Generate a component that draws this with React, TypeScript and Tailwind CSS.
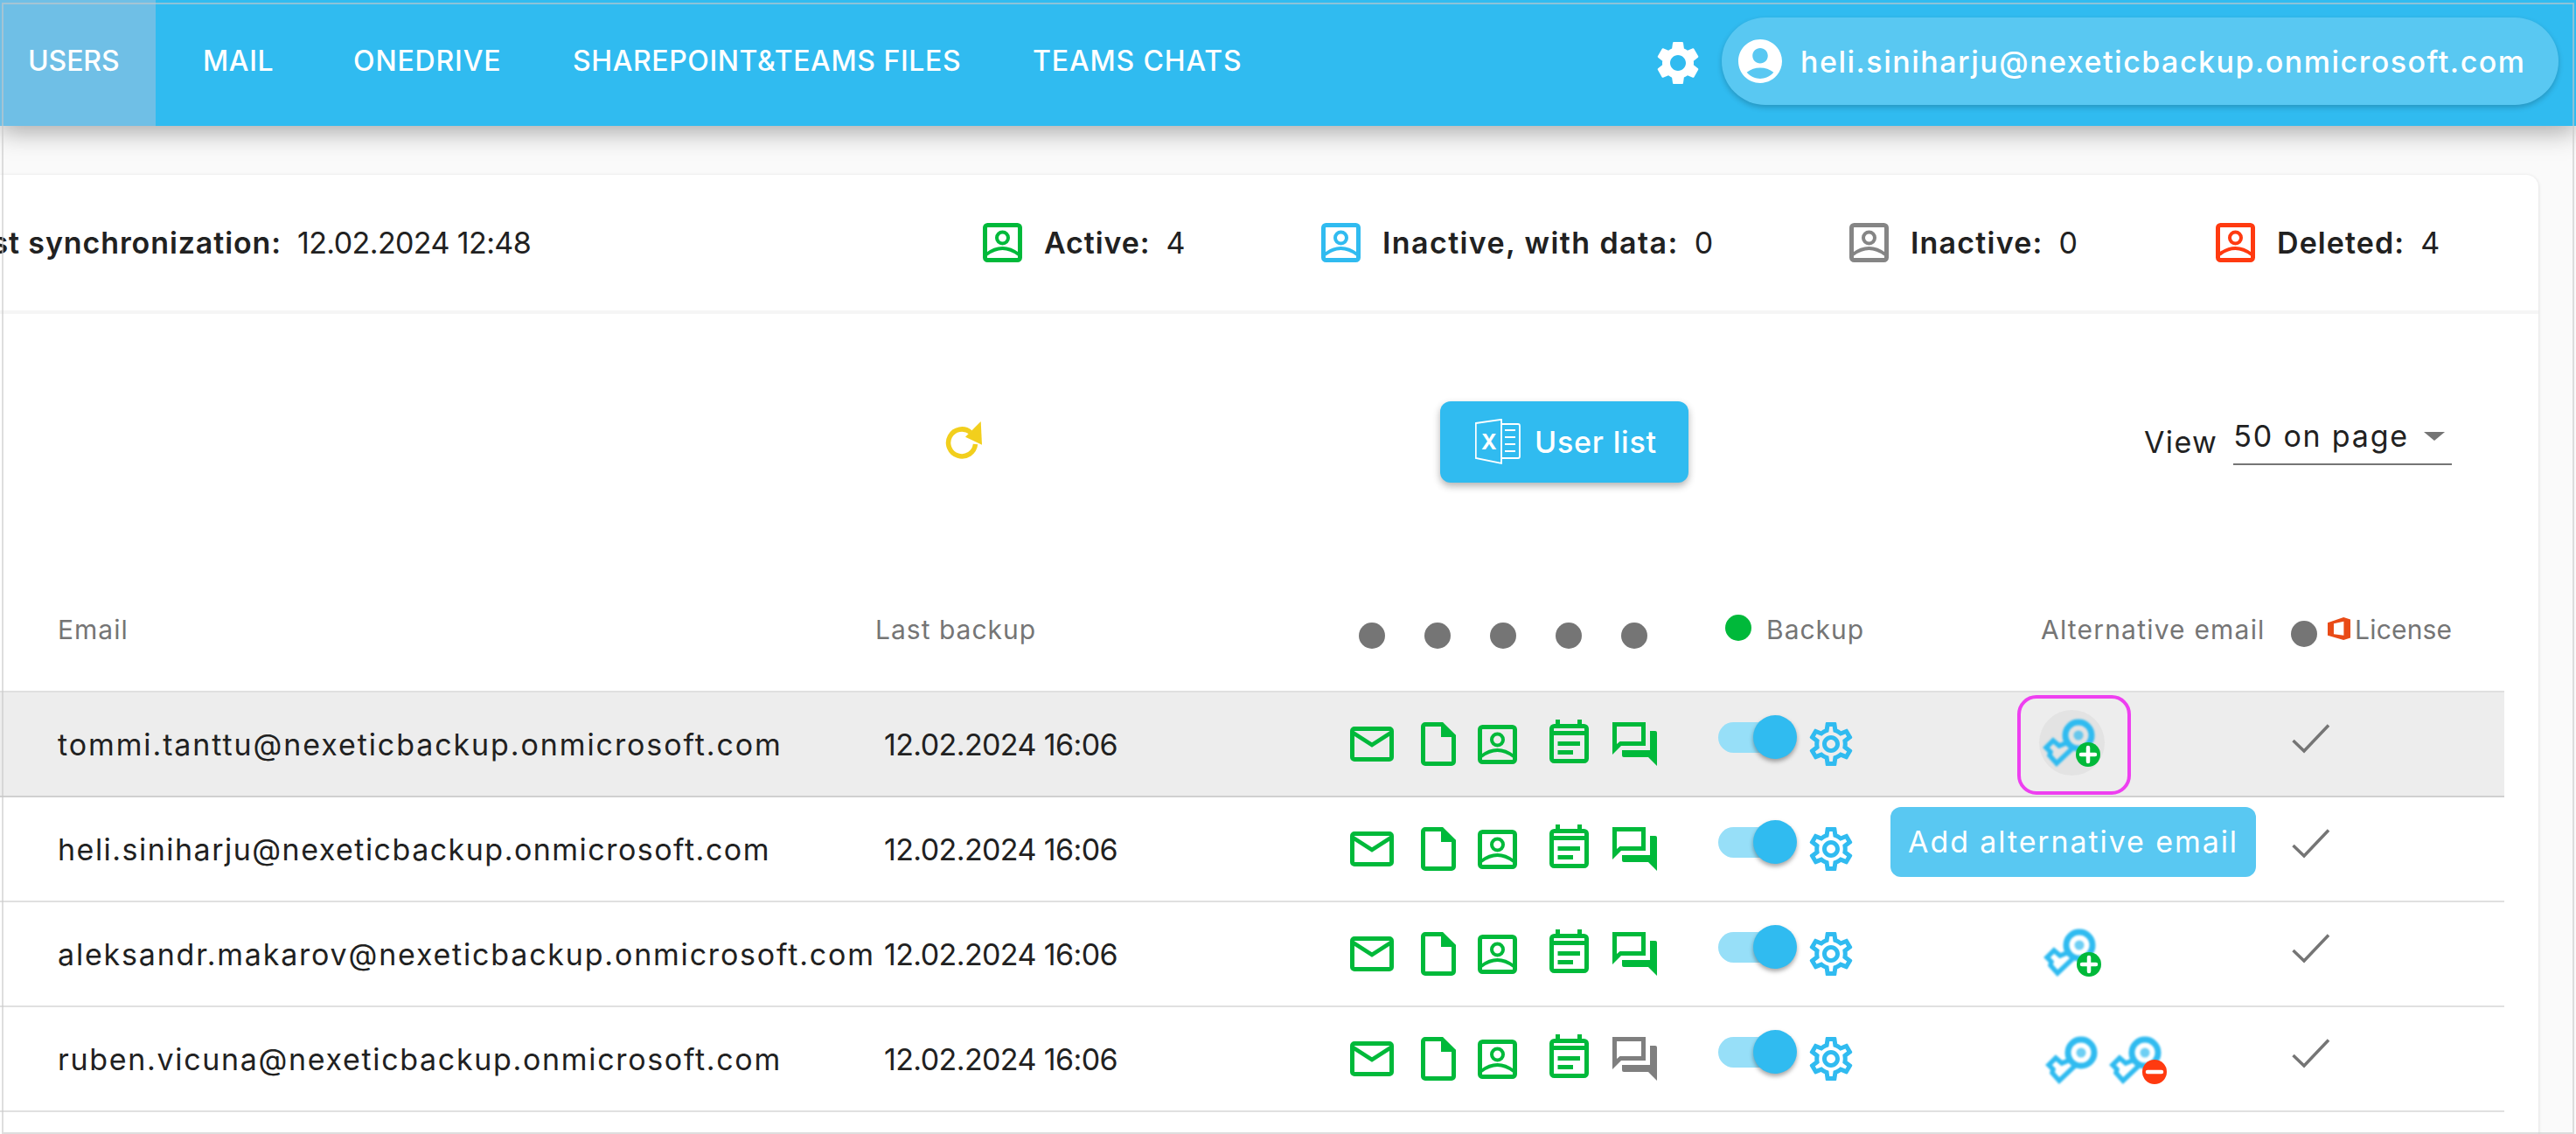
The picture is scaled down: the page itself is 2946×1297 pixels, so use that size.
import React from "react";
import { MdSettings, MdAccountCircle, MdOutlineSettings } from "react-icons/md";

const GREEN = "#00b93a";
const BLUE = "#30bbf0";

function MailIcon() {
  return (
    <svg width="50" height="40" viewBox="0 0 50 40" className="flex-none">
      <rect x="2.5" y="2.5" width="45" height="35" rx="2.5" fill="none" stroke={GREEN} strokeWidth="5" />
      <path d="M4 7.5 L25 21 L46 7.5" fill="none" stroke={GREEN} strokeWidth="4.5" />
    </svg>
  );
}

function FileIcon() {
  return (
    <svg width="40" height="50" viewBox="0 0 40 50" className="flex-none">
      <path d="M2.5 5 A2.5 2.5 0 0 1 5 2.5 H24 L37.5 16 V45 A2.5 2.5 0 0 1 35 47.5 H5 A2.5 2.5 0 0 1 2.5 45 Z" fill="none" stroke={GREEN} strokeWidth="5" />
      <path d="M23 1 H25 L40 15 V17 H23 Z" fill={GREEN} />
    </svg>
  );
}

function PersonCard({ color = GREEN }: { color?: string }) {
  return (
    <svg width="45" height="45" viewBox="0 0 45 45" className="flex-none">
      <rect x="2.5" y="2.5" width="40" height="40" rx="3" fill="none" stroke={color} strokeWidth="5" />
      <circle cx="22.5" cy="17" r="6.5" fill="none" stroke={color} strokeWidth="4" />
      <path d="M4 36 Q22.5 22 41 36" fill="none" stroke={color} strokeWidth="4" />
    </svg>
  );
}

function CalendarIcon() {
  return (
    <svg width="45" height="50" viewBox="0 0 45 50" className="flex-none mb-[6px]">
      <rect x="2.5" y="7.5" width="40" height="40" rx="3" fill="none" stroke={GREEN} strokeWidth="5" />
      <path d="M7 0 H12 V6 H7 Z M32 0 H37 V6 H32 Z M3 13 H42 V18 H3 Z M9.5 25 H35 V30 H9.5 Z M9.5 35 H27 V40 H9.5 Z" fill={GREEN} />
    </svg>
  );
}

function ChatIcon({ color = GREEN }: { color?: string }) {
  return (
    <svg width="51" height="50" viewBox="0 0 51 50" className="flex-none">
      <path fillRule="evenodd" d="M0 0 H38 V27 H10 L0 37 Z M5 5 V25 L8.5 22 H33 V5 Z" fill={color} />
      <path d="M43 10 H49 A2 2 0 0 1 51 12 V50 L41 40 H13 A2 2 0 0 1 11 38 V32 H43 Z" fill={color} />
    </svg>
  );
}

function KeyIcon({ badge }: { badge?: "plus" | "minus" }) {
  return (
    <svg width="76" height="68" viewBox="0 0 76 68" className="flex-none">
      <g style={{ filter: "blur(0.8px)" }}>
        <circle cx="50" cy="30" r="15" fill="none" stroke={BLUE} strokeWidth="7" />
        <circle cx="50" cy="30" r="5.5" fill={BLUE} opacity="0.7" />
        <path d="M38 38 L28 42 L21 36 L13 44 L18 49 L17 53 L25 62 L43.5 44.5" fill="none" stroke={BLUE} strokeWidth="5.5" strokeLinejoin="miter" />
      </g>
      {badge === "plus" && (
        <g>
          <circle cx="61" cy="52" r="14" fill={GREEN} />
          <path d="M61 44 V60 M53 52 H69" stroke="#fff" strokeWidth="4.5" strokeLinecap="round" />
        </g>
      )}
      {badge === "minus" && (
        <g>
          <circle cx="61" cy="52" r="14" fill="#ff3a10" />
          <path d="M53 52 H69" stroke="#fff" strokeWidth="4.5" strokeLinecap="round" />
        </g>
      )}
    </svg>
  );
}

function CheckIcon() {
  return (
    <svg width="44" height="34" viewBox="0 0 44 34" className="flex-none mb-[13px]">
      <path d="M1.5 19 L14 31 L42 1.5" fill="none" stroke="#757575" strokeWidth="3.5" />
    </svg>
  );
}

function RefreshIcon() {
  return (
    <svg width="50" height="50" viewBox="0 0 50 50" className="flex-none">
      <path d="M30 17.5 A15.5 15.5 0 1 0 35.5 31" fill="none" stroke="#f2cf1d" strokeWidth="5.5" />
      <path d="M41.7 5 L43 31.7 L24 22.7 Z" fill="#f2cf1d" />
    </svg>
  );
}

function ExcelIcon() {
  return (
    <svg width="52" height="54" viewBox="0 0 52 54" className="flex-none">
      <path d="M0.8 5 L30 0.8 V51 L0.8 45 Z" fill="none" stroke="#fff" strokeWidth="1.8" />
      <path d="M30 6 H49 A2 2 0 0 1 51 8 V43 A2 2 0 0 1 49 45 H30" fill="none" stroke="#fff" strokeWidth="1.8" />
      <path d="M34 13 H46 M34 21 H46 M34 29 H46 M34 37 H46" stroke="#fff" strokeWidth="1.8" />
      <text x="7" y="35" fontSize="24" fontWeight="700" fill="#fff" fontFamily="Inter, sans-serif">X</text>
    </svg>
  );
}

function OfficeIcon() {
  return (
    <svg width="26" height="26" viewBox="0 0 25 25" className="flex-none">
      <path fillRule="evenodd" d="M0 6 L17.5 0 L25 2.5 V22.5 L17.5 25 L0 20 Z M6.7 7 V18.5 L17.7 20 V4.5 Z" fill="#e94b17" />
    </svg>
  );
}

function Dot({ color = "#757575" }: { color?: string }) {
  return <span className="block w-[30px] h-[30px] rounded-full flex-none" style={{ backgroundColor: color }} />;
}

function Toggle() {
  return (
    <div className="relative w-[90px] h-[50px] mb-[16px] flex-none flex items-center">
      <div className="w-[85px] h-[35px] rounded-full bg-[#97dff8]" />
      <div className="absolute right-0 top-0 w-[50px] h-[50px] rounded-full bg-[#30bbf0] shadow-[0_3px_5px_rgba(0,0,0,0.35)]" />
    </div>
  );
}

function Stat({ color, label, value, track }: { color: string; label: string; value: string; track: string }) {
  return (
    <div className="flex items-center">
      <PersonCard color={color} />
      <span className={"ml-[25px] font-semibold " + track}>{label}</span>
      <span className="ml-[18px]">{value}</span>
    </div>
  );
}

type RowData = {
  email: string;
  track: string;
  chat: string;
  alt: React.ReactNode;
  hovered?: boolean;
  tooltip?: boolean;
};

function Row({ email, track, chat, alt, hovered, tooltip }: RowData) {
  return (
    <div
      className={
        "relative flex items-center h-[120px] w-[2864px] border-b-2 " +
        (hovered ? "bg-[#ededed] border-[#d0d0d0]" : "border-[#e0e0e0]")
      }
    >
      <div className={"w-[1011px] pl-[66px] flex-none text-[34px] whitespace-nowrap " + track}>{email}</div>
      <div className="w-[533px] flex-none text-[34px] tracking-[-0.6px]">12.02.2024 16:06</div>
      <div className="w-[421px] flex-none flex items-center">
        <div className="w-[81px] flex-none"><MailIcon /></div>
        <div className="w-[65px] flex-none"><FileIcon /></div>
        <div className="w-[82px] flex-none"><PersonCard /></div>
        <div className="w-[72px] flex-none flex"><CalendarIcon /></div>
        <ChatIcon color={chat} />
      </div>
      <Toggle />
      <div className="ml-[14px] w-[49px] flex-none flex justify-center">
        <MdOutlineSettings className="flex-none" size={60} color={BLUE} />
      </div>
      <div className="ml-[210px] w-[293px] flex-none flex items-center">{alt}</div>
      <div className="flex-none flex"><CheckIcon /></div>
      {hovered && (
        <div className="absolute left-[2307px] top-[3px] w-[130px] h-[114px] rounded-[22px] border-[4px] border-[#ee3ff0]" />
      )}
      {tooltip && (
        <div className="absolute left-[2162px] top-[11px] w-[418px] h-[80px] rounded-[12px] bg-[#59c8f2] text-white text-[34px] tracking-[1.9px] flex items-center justify-center whitespace-nowrap pb-[2px]">
          Add alternative email
        </div>
      )}
    </div>
  );
}

export default function App() {
  return (
    <div className="relative w-[2946px] h-[1297px] overflow-hidden bg-[#fafafa] text-[#212121] font-['Inter',sans-serif]">
      {/* top navigation */}
      <header className="relative z-10 h-[144px] bg-[#30bbf0] text-white flex items-center shadow-[0_6px_28px_rgba(0,0,0,0.35)]">
        <div className="w-[178px] h-full flex-none bg-[#6fbfe6] pl-[32px] flex items-center pb-[5px] text-[32px] font-medium tracking-[-0.1px]">USERS</div>
        <nav className="ml-[54px] grid grid-cols-[172px_251px_526px_auto] w-[1190px] h-full items-center pb-[5px] text-[32px] font-medium whitespace-nowrap">
          <span className="tracking-[0.65px]">MAIL</span>
          <span className="tracking-[0.85px]">ONEDRIVE</span>
          <span className="tracking-[0.6px]">SHAREPOINT&amp;TEAMS FILES</span>
          <span className="tracking-[0.85px]">TEAMS CHATS</span>
        </nav>
        <div className="ml-[472px] w-[49px] flex-none flex justify-center">
          <MdSettings className="flex-none" size={60} />
        </div>
        <div className="ml-[26px] w-[957px] h-[100px] mb-[4px] flex-none rounded-full bg-[#59c8f2] shadow-[0_3px_6px_rgba(0,0,0,0.2)] flex items-center pl-[14px]">
          <MdAccountCircle className="flex-none" size={60} />
          <span className="ml-[16px] text-[34px] font-medium tracking-[1.5px] whitespace-nowrap">heli.siniharju@nexeticbackup.onmicrosoft.com</span>
        </div>
      </header>

      {/* card */}
      <main className="pt-[56px]">
        <section className="w-[2903px] h-[1097px] bg-white rounded-tr-[14px] shadow-[0_1px_4px_rgba(0,0,0,0.14)] overflow-hidden">
          <div className="h-[159px] border-b-[4px] border-[#f5f5f5] grid grid-cols-[1124px_387px_604px_419px_1fr] items-center text-[34px]">
            <div className="flex items-center whitespace-nowrap">
              <div className="w-[322px] flex-none overflow-hidden flex justify-end font-semibold tracking-[0.9px]">
                <span className="flex-none">Last synchronization:</span>
              </div>
              <span className="ml-[18px] tracking-[-0.6px]">12.02.2024 12:48</span>
            </div>
            <Stat color={GREEN} label="Active:" value="4" track="tracking-[0.9px]" />
            <Stat color={BLUE} label="Inactive, with data:" value="0" track="tracking-[1.4px]" />
            <Stat color="#858585" label="Inactive:" value="0" track="tracking-[1.2px]" />
            <Stat color="#ff3a10" label="Deleted:" value="4" track="tracking-[1.1px]" />
          </div>

          {/* toolbar */}
          <div className="h-[321px] pt-[100px] flex items-start">
            <div className="ml-[1080px] mt-[18px] flex-none"><RefreshIcon /></div>
            <button className="ml-[517px] w-[284px] h-[93px] flex-none rounded-[12px] bg-[#30bbf0] text-white shadow-[0_4px_8px_rgba(0,0,0,0.3)] flex items-center pl-[40px]">
              <ExcelIcon />
              <span className="ml-[16px] text-[34px] font-medium tracking-[0.8px]">User list</span>
            </button>
            <span className="ml-[521px] mt-[21px] text-[34px] tracking-[1.4px]">View</span>
            <div className="ml-[18px] w-[250px] h-[56px] mt-[17px] border-b-2 border-[#757575] flex items-center flex-none">
              <span className="text-[34px] tracking-[1.8px] whitespace-nowrap -mt-[9px]">50 on page</span>
              <span className="ml-[17px] block w-0 h-0 border-x-[12px] border-x-transparent border-t-[10px] border-t-[#757575] -mt-[8px]" />
            </div>
          </div>

          {/* table header */}
          <div className="h-[112px] w-[2864px] flex border-b-2 border-[#e0e0e0] text-[#757575] text-[30px] tracking-[1px]">
            <div className="w-[1001px] flex-none pl-[66px] pt-[18px]">Email</div>
            <div className="w-[553px] flex-none pt-[18px]">Last backup</div>
            <div className="w-[419px] flex-none flex gap-[45px] pt-[32px]">
              <Dot /><Dot /><Dot /><Dot /><Dot />
            </div>
            <div className="w-[361px] flex-none flex pt-[23px]">
              <Dot color={GREEN} />
              <span className="ml-[17px] -mt-[5px]">Backup</span>
            </div>
            <div className="w-[286px] flex-none pt-[18px] whitespace-nowrap tracking-[1.2px]">Alternative email</div>
            <div className="flex-none flex pt-[30px]">
              <Dot />
              <div className="ml-[12px] -mt-[4px]"><OfficeIcon /></div>
              <span className="ml-[5px] -mt-[12px] tracking-[0.2px]">License</span>
            </div>
          </div>

          <Row
            email="tommi.tanttu@nexeticbackup.onmicrosoft.com"
            track="tracking-[1.9px]"
            chat={GREEN}
            hovered
            alt={
              <div className="relative mb-[12px] -ml-[1px]">
                <div className="absolute left-[5px] top-[1px] w-[75px] h-[75px] rounded-full bg-[#e3e3e3]" />
                <div className="relative"><KeyIcon badge="plus" /></div>
              </div>
            }
          />
          <Row email="heli.siniharju@nexeticbackup.onmicrosoft.com" track="tracking-[1.48px]" chat={GREEN} tooltip alt={null} />
          <Row
            email="aleksandr.makarov@nexeticbackup.onmicrosoft.com"
            track="tracking-[1.8px]"
            chat={GREEN}
            alt={<div className="mb-[12px]"><KeyIcon badge="plus" /></div>}
          />
          <Row
            email="ruben.vicuna@nexeticbackup.onmicrosoft.com"
            track="tracking-[1.67px]"
            chat="#7f7f7f"
            alt={
              <div className="mb-[6px] ml-[2px] flex">
                <KeyIcon />
                <div className="-ml-[3px]"><KeyIcon badge="minus" /></div>
              </div>
            }
          />
        </section>
      </main>

      {/* thin outline of the captured window */}
      <div className="absolute inset-x-[2px] top-[3px] bottom-0 z-20 border-2 border-[#c8c8c8]/60 pointer-events-none" />
    </div>
  );
}
